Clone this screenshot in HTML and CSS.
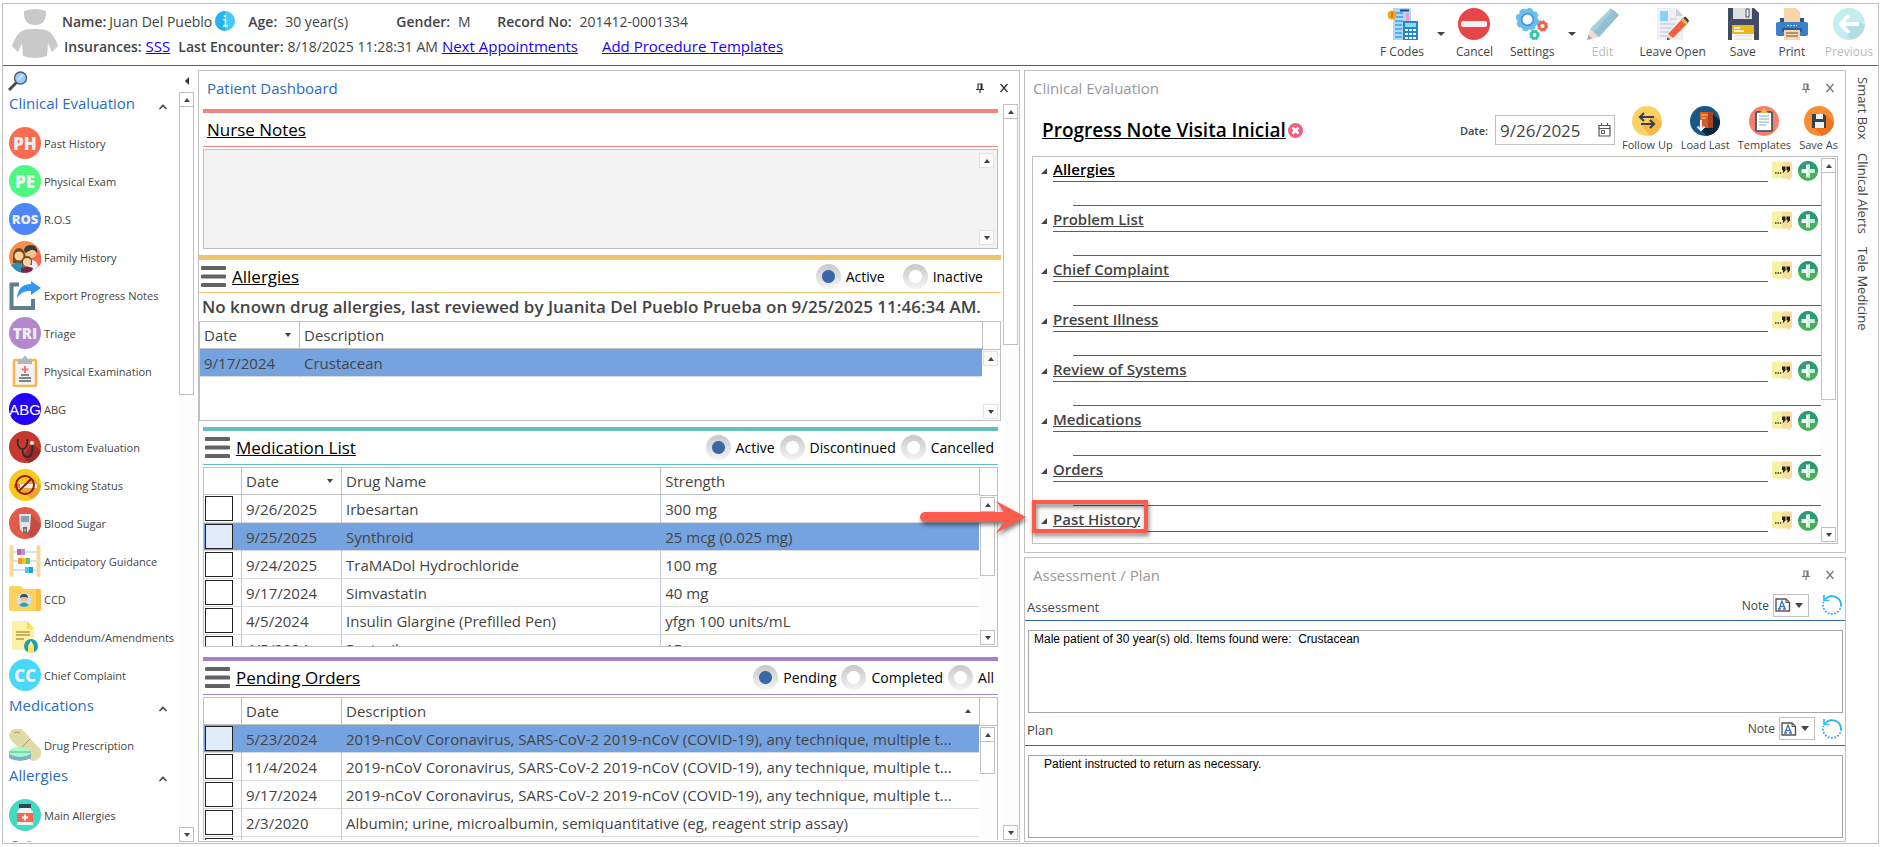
FILE: index.html
```
<!DOCTYPE html>
<html lang="en">
<head>
  <meta charset="UTF-8">
  <title>Patient Dashboard</title>
  <link rel="stylesheet" href="styles.css">
</head>
<body>

<!-- icons used more than once -->
<svg class="sprite" aria-hidden="true">
  <symbol id="i-menu" viewBox="0 0 25 21"><path d="M1.5 2h22M1.500 10.500h22M1.500 19h22" stroke="#636363" stroke-width="4" stroke-linecap="round"/></symbol>
  <symbol id="i-pin" viewBox="0 0 10 10"><path d="M3 6V1h4v5M1 6.500h8M5 6.500V10" fill="none" stroke="currentColor" stroke-width="1.200"/><path d="M5.500 1H7v5H5.500z" fill="currentColor"/></symbol>
  <symbol id="i-close" viewBox="0 0 10 10"><path d="M1.500 1l7 8M8.500 1l-7 8" stroke="currentColor" stroke-width="1.300"/></symbol>
  <symbol id="i-chevron" viewBox="0 0 10 6"><path d="M1.500 5L5 1.500 8.500 5" fill="none" stroke="#444" stroke-width="1.600"/></symbol>
  <symbol id="i-note" viewBox="0 0 20 19"><path d="M2 0h8v17H2a2 2 0 0 1-2-2V2a2 2 0 0 1 2-2z" fill="#f5f3a0"/><path d="M10 0h8a2 2 0 0 1 2 2v13a2 2 0 0 1-2 2v2l-3-2h-5z" fill="#f6df9c"/><path d="M3 11.500h1.500M5.500 11.500H7M8 11.500h1.200" stroke="#333" stroke-width="1.300"/><path d="M10 5h3.500v4L11 11.500V8.500h-1zM14.500 5H18v4l-2.500 2.500V8.500h-1z" fill="#222"/></symbol>
  <symbol id="i-plus" viewBox="0 0 20 20"><circle cx="10" cy="10" r="10" fill="#46b158"/><path d="M0 10a10 10 0 0 1 20 0z" fill="#2a9a78"/><path d="M8 3.500h4V8h4.500v4H12v4.500H8V12H3.500V8H8z" fill="#eefaf0"/><path d="M10 3.500h2V8h4.500v4H12v4.500h-2z" fill="#cdeed8"/></symbol>
  <symbol id="i-doc" viewBox="0 0 16 14"><path d="M1 1h10l3.500 3.500V13H1z" fill="#fff" stroke="#555" stroke-width="1.400"/><path d="M11 1v3.500h3.500" fill="none" stroke="#555"/><path d="M3 11h3M8 11h3M4.200 10.500L7 3l3 7.500M5.300 8.500h3.500" fill="none" stroke="#3b78c4" stroke-width="1.300"/></symbol>
  <symbol id="i-redo" viewBox="0 0 20 20"><path d="M3 4.500A9 9 0 0 1 19 10" fill="none" stroke="#29b1ee" stroke-width="1.700"/><path d="M19 10A9 9 0 1 1 1.500 7" fill="none" stroke="#29a6ea" stroke-width="1.700" stroke-dasharray="1.800 1.500"/><path d="M2 0v5.500h5.500" fill="none" stroke="#29c0f5" stroke-width="1.700"/></symbol>
</svg>

<div class="app">
  <header class="topbar">
    <svg class="avatar" viewBox="0 0 46 50"><path d="M12 3q11-4 22 0 1 14-11 14T12 3z" fill="#c9c9c9"/><path d="M10 23q3-2 13-2t13 2q6 3 10 15l-6 6-4-9-1 13q-12 4-24 0l-1-13-4 9-6-6q4-12 10-15z" fill="#c9c9c9"/></svg>
    <div class="patient">
      <div class="patient-row">
        <span class="field name"><b>Name:</b>Juan Del Pueblo
          <svg class="info" viewBox="0 0 20 20"><circle cx="10" cy="10" r="10" fill="#42cbfb"/><path d="M10 0a10 10 0 0 0 0 20z" fill="#25b4ee"/><circle cx="10" cy="5" r="1.300" fill="#fff"/><path d="M8.500 8.500H10.500V15M8 15h5" fill="none" stroke="#fff" stroke-width="1.500"/></svg>
        </span>
        <span class="field age"><b>Age:</b>30 year(s)</span>
        <span class="field gender"><b>Gender:</b>M</span>
        <span class="field"><b>Record No:</b>201412-0001334</span>
      </div>
      <div class="patient-row second">
        <span class="field tight"><b>Insurances:</b><a href="#">SSS</a></span>
        <span class="field tight"><b>Last Encounter:</b>8/18/2025 11:28:31 AM <a href="#">Next Appointments</a></span>
        <a class="templates" href="#">Add Procedure Templates</a>
      </div>
    </div>

    <nav class="toolbar">
      <div class="split">
        <button class="tool">
          <svg viewBox="0 0 32 32"><path d="M7 0h18v32H7z" fill="#a9d9fb"/><path d="M9 5h8M9 9h8M9 13h8M9 17h7M9 21h7M9 25h7M9 29h7" stroke="#4097f0" stroke-width="1.500"/><path d="M14 1.500h9v2h-9z" fill="#2b3f73"/><path d="M20 5h3v8h-3z" fill="#f79ac0"/><circle cx="6" cy="7" r="4.500" fill="#f8a51b"/><path d="M6 4v6" stroke="#c66d08" stroke-width="1.500"/><path d="M17 13h15v19H17z" fill="#2386cf"/><path d="M19 15h11v4H19z" fill="#8fdcf9"/><path d="M19 21h3v2h-3zM23 21h3v2h-3zM27 21h3v2h-3zM19 25h3v2h-3zM23 25h3v2h-3zM27 25h3v2h-3zM19 29h3v2h-3zM23 29h3v2h-3zM27 29h3v2h-3z" fill="#fff"/></svg>
          F Codes
        </button>
        <button class="caret" aria-label="More codes"></button>
      </div>
      <button class="tool">
        <svg viewBox="0 0 32 32"><circle cx="16" cy="16" r="16" fill="#e8454a"/><rect x="3" y="13" width="26" height="6" rx="2" fill="#f3f1f1"/></svg>
        Cancel
      </button>
      <div class="split">
        <button class="tool">
          <svg viewBox="0 0 32 32"><circle cx="11.500" cy="11.500" r="8" fill="none" stroke="#69bdf1" stroke-width="5"/><circle cx="11.500" cy="11.500" r="10.500" fill="none" stroke="#69bdf1" stroke-width="2.500" stroke-dasharray="5 3.200"/><circle cx="11.500" cy="11.500" r="5.800" fill="#fff" stroke="#3d8fe0" stroke-width="1.500"/><circle cx="26.500" cy="18" r="3.500" fill="none" stroke="#f1634c" stroke-width="2.800"/><circle cx="26.500" cy="18" r="4.900" fill="none" stroke="#f1634c" stroke-width="1.500" stroke-dasharray="2 1.800"/><circle cx="18.500" cy="27" r="3.300" fill="none" stroke="#32c9a8" stroke-width="2.800"/><circle cx="18.500" cy="27" r="4.500" fill="none" stroke="#32c9a8" stroke-width="1.500" stroke-dasharray="2 1.600"/></svg>
          Settings
        </button>
        <button class="caret" aria-label="More settings"></button>
      </div>
      <button class="tool" disabled>
        <svg viewBox="0 0 32 32"><path d="M3 21L24 0l8 7-20 22z" fill="#a4d0de"/><path d="M26 2l6 5-20 22-5-4z" fill="#92c1d2"/><path d="M3 21l9 8-12 3z" fill="#f3d9cf"/><path d="M0 32l1.500-5 4 3.500z" fill="#aab"/></svg>
        Edit
      </button>
      <button class="tool wide">
        <svg viewBox="0 0 32 32"><path d="M0 0h19l7 7v25H0z" fill="#eef0f4"/><path d="M19 0l7 8h-7z" fill="#ccd2df"/><path d="M3 3h8v10H3z" fill="#80d4fa"/><path d="M13 11h7M3 16h15M3 20h12M3 24h9M3 28h8" stroke="#ccd2df" stroke-width="1.500"/><path d="M11 26L26 10l5 5-15 15z" fill="#f2603f"/><path d="M26 10l2.500-1.500 3.500 4L31 15z" fill="#3c4155"/><path d="M24 12l5 5 2-2-5-5z" fill="#f9b53c"/><path d="M11 26l5 4-6 2z" fill="#f7cf93"/><path d="M10 32l.5-2.500 2.500 2z" fill="#333"/></svg>
        Leave Open
      </button>
      <button class="tool">
        <svg viewBox="0 0 32 32"><path d="M1 0h26l5 5v27H1z" fill="#434a66"/><path d="M6 0h19v11H6z" fill="#dfe0e2"/><path d="M19 1h3v8h-3z" fill="#fff" stroke="#434a66"/><path d="M5 17h22v9H5z" fill="#eab818"/><path d="M5 26h22v6H5z" fill="#fff"/><path d="M7 20h6M7 23h10" stroke="#fff" stroke-width="1.500"/><path d="M7 28h18M7 31h18" stroke="#d5d5d5"/></svg>
        Save
      </button>
      <button class="tool">
        <svg viewBox="0 0 32 32"><path d="M8 0h12l4 4v10H8z" fill="#fbd5a7"/><path d="M4 10h4v4h16v-4h4v4H4z" fill="#35507d"/><path d="M2 14h28a2 2 0 0 1 2 2v10a2 2 0 0 1-2 2H2a2 2 0 0 1-2-2V16a2 2 0 0 1 2-2z" fill="#3e80c5"/><path d="M6 20h20v4H6z" fill="#2d5c98"/><path d="M8 22h16v10H8z" fill="#fbd5a7"/><path d="M11 17.500h10" stroke="#cfe3fa" stroke-dasharray="2 1"/><path d="M10 25h12M10 28h12" stroke="#555"/></svg>
        Print
      </button>
      <button class="tool" disabled>
        <svg viewBox="0 0 32 32"><circle cx="16" cy="16" r="16" fill="#c5ecf0"/><path d="M8 18l10 13.500A16 16 0 0 0 32 17l-6-3z" fill="#b1dee3"/><path d="M16 7l-8.500 9L16 25M8 16h18" fill="none" stroke="#fff" stroke-width="4"/></svg>
        Previous
      </button>
    </nav>
  </header>

  <div class="workspace">
    <aside class="sidebar">
      <div class="sidebar-top">
        <button class="search" aria-label="Search"><svg viewBox="0 0 20 20"><path d="M1 19l8-8" stroke="#4a4a4a" stroke-width="3"/><circle cx="12.500" cy="7" r="6" fill="#9dcdfa" stroke="#50606c" stroke-width="1.500"/><path d="M10 9l5-5" stroke="#d4eaff" stroke-width="1.500"/></svg></button>
        <button class="collapse" aria-label="Collapse"></button>
      </div>
      <div class="sidebar-body">
        <div class="menu">
          <h2>Clinical Evaluation <svg><use href="#i-chevron"/></svg></h2>
          <a href="#" class="item"><i class="badge ph">PH</i>Past History</a>
          <a href="#" class="item"><i class="badge pe">PE</i>Physical Exam</a>
          <a href="#" class="item"><i class="badge ros">ROS</i>R.O.S</a>
          <a href="#" class="item"><svg viewBox="0 0 32 32"><circle cx="16" cy="16" r="16" fill="#f78f4d"/><path d="M20 4q10 2 12 12t-8 12z" fill="#f9664b"/><circle cx="22" cy="11" r="6" fill="#f5c48b"/><path d="M15 10q0-6 7-6t6 8q-3-4-6-3t-5 3z" fill="#333b45"/><path d="M17 20q9-4 12 5-4 6-9 7z" fill="#f1f1f3"/><path d="M4 22q-1-15 6-15t7 15z" fill="#774824"/><circle cx="10" cy="15" r="4.500" fill="#fcd19c"/><path d="M2 24q8-5 14 0l-1 8Q6 31 2 24z" fill="#2c8fb3"/><path d="M13 24q-1-9 5-9t5 9z" fill="#774824"/><circle cx="18" cy="21" r="4" fill="#fcd19c"/><path d="M12 27q6-3 12 0l-1 3q-5 3-11 1z" fill="#7c2253"/></svg>Family History</a>
          <a href="#" class="item"><svg viewBox="0 0 32 32"><path d="M10 5.500H2.500V29H24V20" fill="none" stroke="#5f7f8e" stroke-width="4"/><path d="M8 19Q9 5 22 5V2l10 7-10 7v-4q-9-1-14 7z" fill="#3698f4"/></svg>Export Progress Notes</a>
          <a href="#" class="item"><i class="badge tri">TRI</i>Triage</a>
          <a href="#" class="item"><svg viewBox="0 0 32 32"><rect x="5" y="5" width="22" height="26" rx="1" fill="#f3f2f2" stroke="#f9b548" stroke-width="2.500"/><path d="M9 4h4l3-3.500L19 4h4v5H9z" fill="#b3b6b8"/><path d="M16 11v7M12.500 14.500h7" stroke="#f27374" stroke-width="2"/><path d="M12 20h8M10 23h12M10 26h12" stroke="#566" stroke-width="1.300"/></svg>Physical Examination</a>
          <a href="#" class="item"><i class="badge abg">ABG</i>ABG</a>
          <a href="#" class="item"><svg viewBox="0 0 32 32"><circle cx="16" cy="16" r="16" fill="#c5392f"/><path d="M23 12l9 8q-3 9-12 12l-6-7z" fill="#9d2a25"/><path d="M10 9H8.500q0 9 5 9t5-9H17M13.500 18q0 8 5 8t5-12" fill="none" stroke="#2b2b2f" stroke-width="1.700"/><circle cx="23" cy="12" r="2" fill="#eee"/></svg>Custom Evaluation</a>
          <a href="#" class="item"><svg viewBox="0 0 32 32"><circle cx="16" cy="16" r="16" fill="#f8c81e"/><path d="M24 9l8 8q-1 9-9 13l-11-7z" fill="#eda531"/><path d="M5 15h13v4H5z" fill="#f47721"/><path d="M11 15h17v4H11z" fill="#f4f4f4"/><circle cx="16" cy="16" r="9" fill="none" stroke="#93190f" stroke-width="2"/><path d="M9.500 22.500l13-13" stroke="#93190f" stroke-width="2"/></svg>Smoking Status</a>
          <a href="#" class="item"><svg viewBox="0 0 32 32"><circle cx="16" cy="16" r="16" fill="#e35a4b"/><path d="M22 8l10 10q-2 9-9 13l-8-7z" fill="#c44b3d"/><path d="M10 7h12l-1 15-3 4h-4l-3-4z" fill="#dfe5ea"/><path d="M12 9h8v6h-8z" fill="#87a1b3"/><path d="M14 20h4v6h-4z" fill="#566e80"/><circle cx="16" cy="23" r="1.500" fill="#e8a831"/></svg>Blood Sugar</a>
          <a href="#" class="item"><svg viewBox="0 0 32 32"><path d="M2 7h28M2 16h28M2 25h28" stroke="#c6daeb" stroke-width="1.500"/><path d="M2.500 2v28M29.500 2v28" stroke="#f3d9a0" stroke-width="4" stroke-linecap="round"/><path d="M8 4h4v6H8z" fill="#c9619c"/><path d="M12 4h4v6h-4z" fill="#b794cf"/><path d="M9 13h4v6H9z" fill="#f49430"/><path d="M13 13h4v6h-4z" fill="#f8c512"/><path d="M17 13h4v6h-4z" fill="#6fbf7b"/><path d="M16 22h4v6h-4z" fill="#45cdec"/><path d="M20 22h4v6h-4z" fill="#309cc8"/></svg>Anticipatory Guidance</a>
          <a href="#" class="item"><svg viewBox="0 0 32 32"><path d="M0 5q0-2 2-2h9l4 3h15q2 0 2 2v18q0 2-2 2H2q-2 0-2-2z" fill="#fcd25c"/><path d="M27 6h3q2 0 2 2v18q0 2-2 2h-3z" fill="#f8bd44"/><circle cx="15" cy="17" r="7.500" fill="#cde0ec"/><circle cx="15" cy="16" r="3.500" fill="#f7c48c"/><path d="M11 15q0-4 4-4t4 4q-4-2-8 0z" fill="#3b4a57"/><path d="M10 22q5-5 10 0-5 4-10 0z" fill="#2ba0ac"/></svg>CCD</a>
          <a href="#" class="item"><svg viewBox="0 0 32 32"><path d="M3 0h15l7 7v22H3z" fill="#fdf1a9"/><path d="M18 0l7 8h-7z" fill="#fede3a"/><path d="M7 11h14M7 14h14M7 18h8" stroke="#b99b3e" stroke-width="1.300"/><circle cx="22" cy="25" r="7" fill="#22a0a0"/><path d="M19 32v-7l3-5 3 5v7z" fill="#fee36c"/><path d="M22 20l-2 4h4z" fill="#fff"/></svg>Addendum/Amendments</a>
          <a href="#" class="item"><i class="badge cc">CC</i>Chief Complaint</a>
          <h2>Medications <svg><use href="#i-chevron"/></svg></h2>
          <a href="#" class="item"><svg viewBox="0 0 32 32"><path d="M2 11Q-2 5 3 1t10-1l18 20q3 6-2 10t-9 0z" fill="#dfdaa8"/><path d="M21 10l-9 9" stroke="#a59e6b"/><path d="M5 4q3-2 6 0" fill="none" stroke="#a8a06b"/><path d="M0 23h22v6q-11 6-22 0z" fill="#7baecb"/><ellipse cx="11" cy="23" rx="11" ry="5" fill="#a2fbc5"/><path d="M0 23h22" stroke="#56b593"/></svg>Drug Prescription</a>
          <h2>Allergies <svg><use href="#i-chevron"/></svg></h2>
          <a href="#" class="item"><svg viewBox="0 0 32 32"><circle cx="16" cy="16" r="16" fill="#44d9c2"/><path d="M10 5h12v4H10z" fill="#34465b"/><path d="M11 9h10l3 4v13H8V13z" fill="#f2f3f5"/><path d="M8 14h16v9H8z" fill="#f5684f"/><path d="M16 15.500v6M13 18.500h6" stroke="#fff" stroke-width="2"/></svg>Main Allergies</a>
          <a href="#" class="item" aria-label="Other"><svg viewBox="0 0 32 32"><circle cx="6" cy="10" r="6" fill="#6f63b5"/><circle cx="20" cy="8" r="4" fill="#e496c6"/><path d="M17 10l6-4" stroke="#c967a4" stroke-width="1.500"/></svg></a>
        </div>
        <div class="scroll"><button class="up" aria-label="Up"></button><div class="track"><div class="thumb" style="height:40%"></div></div><button class="down" aria-label="Down"></button></div>
      </div>
    </aside>

    <main class="panel dashboard">
      <div class="panel-title active"><h1>Patient Dashboard</h1><button aria-label="Pin"><svg><use href="#i-pin"/></svg></button><button aria-label="Close"><svg><use href="#i-close"/></svg></button></div>
      <div class="dashboard-body">
        <div class="sections">
          <section class="section nurse">
            <div class="section-head"><a href="#">Nurse Notes</a></div>
            <div class="notes">
              <textarea readonly aria-label="Nurse Notes"></textarea>
              <div class="scroll soft"><button class="up" aria-label="Up"></button><div class="track"></div><button class="down" aria-label="Down"></button></div>
            </div>
          </section>

          <section class="section allergies">
            <div class="section-head">
              <svg class="menu-icon"><use href="#i-menu"/></svg><a href="#">Allergies</a>
              <div class="radios">
                <label><input type="radio" name="allergy" checked>Active</label>
                <label><input type="radio" name="allergy">Inactive</label>
              </div>
            </div>
            <p class="reviewed">No known drug allergies, last reviewed by Juanita Del Pueblo Prueba on 9/25/2025 11:46:34 AM.</p>
            <div class="grid">
              <table>
                <thead><tr><th class="date">Date<span class="sort-down"></span></th><th>Description</th></tr></thead>
                <tbody><tr class="selected"><td>9/17/2024</td><td>Crustacean</td></tr></tbody>
              </table>
              <div class="scroll-col"><div class="scroll soft"><button class="up" aria-label="Up"></button><div class="track"></div><button class="down" aria-label="Down"></button></div></div>
            </div>
          </section>

          <section class="section medication">
            <div class="section-head">
              <svg class="menu-icon"><use href="#i-menu"/></svg><a href="#">Medication List</a>
              <div class="radios">
                <label><input type="radio" name="medication" checked>Active</label>
                <label><input type="radio" name="medication">Discontinued</label>
                <label><input type="radio" name="medication">Cancelled</label>
              </div>
            </div>
            <div class="grid">
              <table>
                <thead><tr><th class="check"></th><th class="date">Date<span class="sort-down"></span></th><th>Drug Name</th><th class="strength">Strength</th></tr></thead>
                <tbody>
                  <tr><td class="check"><input type="checkbox" aria-label="Irbesartan"></td><td>9/26/2025</td><td>Irbesartan</td><td>300 mg</td></tr>
                  <tr class="selected"><td class="check"><input type="checkbox" aria-label="Synthroid"></td><td>9/25/2025</td><td>Synthroid</td><td>25 mcg (0.025 mg)</td></tr>
                  <tr><td class="check"><input type="checkbox" aria-label="TraMADol"></td><td>9/24/2025</td><td>TraMADol Hydrochloride</td><td>100 mg</td></tr>
                  <tr><td class="check"><input type="checkbox" aria-label="Simvastatin"></td><td>9/17/2024</td><td>Simvastatin</td><td>40 mg</td></tr>
                  <tr><td class="check"><input type="checkbox" aria-label="Insulin Glargine"></td><td>4/5/2024</td><td>Insulin Glargine (Prefilled Pen)</td><td>yfgn 100 units/mL</td></tr>
                  <tr><td class="check"><input type="checkbox" aria-label="Restoril"></td><td>4/5/2024</td><td>Restoril</td><td>15 mg</td></tr>
                </tbody>
              </table>
              <div class="scroll-col"><div class="scroll"><button class="up" aria-label="Up"></button><div class="track"><div class="thumb" style="height:54%"></div></div><button class="down" aria-label="Down"></button></div></div>
            </div>
          </section>

          <section class="section pending">
            <div class="section-head">
              <svg class="menu-icon"><use href="#i-menu"/></svg><a href="#">Pending Orders</a>
              <div class="radios">
                <label><input type="radio" name="orders" checked>Pending</label>
                <label><input type="radio" name="orders">Completed</label>
                <label><input type="radio" name="orders">All</label>
              </div>
            </div>
            <div class="grid">
              <table>
                <thead><tr><th class="check"></th><th class="date">Date</th><th>Description<span class="sort-up"></span></th></tr></thead>
                <tbody>
                  <tr class="selected"><td class="check"><input type="checkbox" aria-label="Order 5/23/2024"></td><td>5/23/2024</td><td>2019-nCoV Coronavirus, SARS-CoV-2 2019-nCoV (COVID-19), any technique, multiple t...</td></tr>
                  <tr><td class="check"><input type="checkbox" aria-label="Order 11/4/2024"></td><td>11/4/2024</td><td>2019-nCoV Coronavirus, SARS-CoV-2 2019-nCoV (COVID-19), any technique, multiple t...</td></tr>
                  <tr><td class="check"><input type="checkbox" aria-label="Order 9/17/2024"></td><td>9/17/2024</td><td>2019-nCoV Coronavirus, SARS-CoV-2 2019-nCoV (COVID-19), any technique, multiple t...</td></tr>
                  <tr><td class="check"><input type="checkbox" aria-label="Order 2/3/2020"></td><td>2/3/2020</td><td>Albumin; urine, microalbumin, semiquantitative (eg, reagent strip assay)</td></tr>
                  <tr><td class="check"><input type="checkbox" aria-label="Order"></td><td></td><td></td></tr>
                </tbody>
              </table>
              <div class="scroll-col"><div class="scroll"><button class="up" aria-label="Up"></button><div class="track"><div class="thumb" style="height:27%"></div></div><button class="down" aria-label="Down"></button></div></div>
            </div>
          </section>
        </div>
        <div class="scroll"><button class="up" aria-label="Up"></button><div class="track"><div class="thumb" style="height:32%"></div></div><button class="down" aria-label="Down"></button></div>
      </div>
    </main>

    <div class="right">
      <section class="panel evaluation">
        <div class="panel-title"><h1>Clinical Evaluation</h1><button aria-label="Pin"><svg><use href="#i-pin"/></svg></button><button aria-label="Close"><svg><use href="#i-close"/></svg></button></div>
        <div class="note-bar">
          <a class="note-name" href="#">Progress Note Visita Inicial</a>
          <button class="remove" aria-label="Remove note"><svg viewBox="0 0 15 15"><circle cx="7.500" cy="7.500" r="7.500" fill="#f4607a"/><path d="M4.500 4.500l6 6M10.500 4.500l-6 6" stroke="#fff" stroke-width="2.500"/></svg></button>
          <label class="date-label" for="note-date">Date:</label>
          <div class="date-box"><input id="note-date" type="text" value="9/26/2025"><svg viewBox="0 0 13 14"><path d="M1 2.500h11V13H1zM1 5.500h11M3.500 0v3M9.500 0v3" fill="none" stroke="#555" stroke-width="1.200"/><path d="M3.500 7.500h3v3h-3z" fill="none" stroke="#555"/></svg></div>
          <div class="actions">
            <button><svg viewBox="0 0 30 30"><circle cx="15" cy="15" r="15" fill="#fad162"/><path d="M22 10l8 7q-2 9-11 13l-9-9z" fill="#f9b744"/><path d="M12 7l-4 4 4 4M8 11h14M18 14l4 4-4 4M22 18H9" fill="none" stroke="#35404f" stroke-width="2.200"/></svg>Follow Up</button>
            <button><svg viewBox="0 0 30 30"><circle cx="15" cy="15" r="15" fill="#185a85"/><path d="M22 7l8 8q0 12-13 15l-7-7z" fill="#0b2539"/><path d="M10 6h13v16H10z" fill="#a8431f"/><path d="M10 6h8v16h-8z" fill="#d65b2b"/><path d="M11 9h7M11 12h5" stroke="#f9b233" stroke-width="1.500"/><path d="M11 14v10M7.500 20.500L11 24l3.500-3.500" fill="none" stroke="#e8f4ff" stroke-width="2"/></svg>Load Last</button>
            <button><svg viewBox="0 0 30 30"><circle cx="15" cy="15" r="15" fill="#f5806c"/><rect x="7" y="6" width="16" height="19" rx="1" fill="#fff" stroke="#344658" stroke-width="1.600"/><path d="M11 7l4-5 4 5z" fill="#f9b642"/><path d="M10 10h10M10 13h10M10 16h10M10 19h7" stroke="#a9cbe5" stroke-width="1.300"/></svg>Templates</button>
            <button><svg viewBox="0 0 30 30"><circle cx="15" cy="15" r="15" fill="#f88e31"/><path d="M22 9l8 8q-2 10-12 13l-9-9z" fill="#ef7421"/><path d="M8 8h12l2 2v12H8z" fill="#35404f"/><path d="M12 8h7v5h-7zM11 16h9v6h-9z" fill="#eef1f5"/></svg>Save As</button>
          </div>
        </div>
        <div class="outline">
          <div class="topics">
            <div class="topic current"><a href="#">Allergies</a><button aria-label="Note"><svg><use href="#i-note"/></svg></button><button aria-label="Add"><svg><use href="#i-plus"/></svg></button></div>
            <div class="topic"><a href="#">Problem List</a><button aria-label="Note"><svg><use href="#i-note"/></svg></button><button aria-label="Add"><svg><use href="#i-plus"/></svg></button></div>
            <div class="topic"><a href="#">Chief Complaint</a><button aria-label="Note"><svg><use href="#i-note"/></svg></button><button aria-label="Add"><svg><use href="#i-plus"/></svg></button></div>
            <div class="topic"><a href="#">Present Illness</a><button aria-label="Note"><svg><use href="#i-note"/></svg></button><button aria-label="Add"><svg><use href="#i-plus"/></svg></button></div>
            <div class="topic"><a href="#">Review of Systems</a><button aria-label="Note"><svg><use href="#i-note"/></svg></button><button aria-label="Add"><svg><use href="#i-plus"/></svg></button></div>
            <div class="topic"><a href="#">Medications</a><button aria-label="Note"><svg><use href="#i-note"/></svg></button><button aria-label="Add"><svg><use href="#i-plus"/></svg></button></div>
            <div class="topic"><a href="#">Orders</a><button aria-label="Note"><svg><use href="#i-note"/></svg></button><button aria-label="Add"><svg><use href="#i-plus"/></svg></button></div>
            <div class="topic last"><a href="#">Past History</a><button aria-label="Note"><svg><use href="#i-note"/></svg></button><button aria-label="Add"><svg><use href="#i-plus"/></svg></button>
              <div class="callout"><svg viewBox="0 0 106 32"><path d="M5 11h79l-8-11 30 16-30 16 8-11H5a5 5 0 0 1 0-10z" fill="#fc5b4b"/></svg></div>
            </div>
          </div>
          <div class="scroll"><button class="up" aria-label="Up"></button><div class="track"><div class="thumb" style="height:64%"></div></div><button class="down" aria-label="Down"></button></div>
        </div>
      </section>

      <section class="panel assessment">
        <div class="panel-title"><h1>Assessment / Plan</h1><button aria-label="Pin"><svg><use href="#i-pin"/></svg></button><button aria-label="Close"><svg><use href="#i-close"/></svg></button></div>
        <div class="text-head"><label for="assess">Assessment</label><span>Note</span><button class="picker" aria-label="Assessment note"><svg><use href="#i-doc"/></svg></button><button class="redo" aria-label="Reload"><svg><use href="#i-redo"/></svg></button></div>
        <textarea id="assess">Male patient of 30 year(s) old. Items found were:  Crustacean</textarea>
        <div class="text-head plan"><label for="plan">Plan</label><span>Note</span><button class="picker" aria-label="Plan note"><svg><use href="#i-doc"/></svg></button><button class="redo" aria-label="Reload"><svg><use href="#i-redo"/></svg></button></div>
        <textarea id="plan">   Patient instructed to return as necessary.</textarea>
      </section>
    </div>

    <nav class="side-tabs">
      <a href="#">Smart Box</a>
      <a href="#">Clinical Alerts</a>
      <a href="#">Tele Medicine</a>
    </nav>
  </div>
</div>

</body>
</html>
```
FILE: styles.css
```
* {
  box-sizing: border-box;
}

html, body {
  margin: 0;
  height: 100%;
}

body {
  padding: 3px 2px;
  overflow: hidden;
  background: #fff;
  color: #444;
  font-family: "Open Sans", "Noto Sans", sans-serif;
  font-size: 15px;
}

button {
  padding: 0;
  border: 0;
  background: none;
  color: inherit;
  font: inherit;
}

a {
  color: inherit;
}

svg {
  display: block;
  flex: none;
}

textarea {
  display: block;
  resize: none;
  outline: none;
}

.sprite {
  display: none;
}

.app {
  display: flex;
  flex-direction: column;
  height: 100%;
  border: 1px solid #c0c0c0;
}

/* top bar */

.topbar {
  flex: none;
  display: flex;
  height: 62px;
  padding: 4px 5px 0 9px;
  border-bottom: 1px solid #3566a5;
}

.avatar {
  width: 46px;
  height: 50px;
}

.patient {
  flex: 1;
  padding: 2px 0 0 4px;
  font-size: 14px;
  white-space: nowrap;
}

.patient b {
  font-weight: 600;
}

.patient a {
  color: #1b00f5;
  font-size: 15px;
}

.patient-row {
  display: flex;
  height: 22px;
  align-items: center;
}

.patient-row.second {
  gap: 8px;
  padding-left: 2px;
  margin-top: 3px;
}

.field {
  display: flex;
  gap: 8px;
  align-items: center;
}

.field.name {
  gap: 3px;
  margin-right: 13px;
}

.field.tight {
  gap: 4px;
}

.field.age {
  min-width: 148px;
}

.field.gender {
  min-width: 101px;
}

.templates {
  margin-left: 16px;
}

.info {
  width: 20px;
  height: 20px;
}

.toolbar {
  display: flex;
  gap: 17px;
  align-items: flex-start;
}

.tool {
  display: flex;
  flex-direction: column;
  align-items: center;
  gap: 4px;
  font-size: 12px;
  line-height: 16px;
  white-space: nowrap;
}

.tool svg {
  width: 32px;
  height: 32px;
}

.tool.wide {
  padding: 0 4px;
}

.tool:disabled {
  color: #bbb;
}

.split {
  display: flex;
  gap: 13px;
  margin-right: -6px;
}

.caret {
  align-self: center;
  border: 4px solid transparent;
  border-top-color: #444;
  border-bottom: 0;
}

/* layout under the bar */

.workspace {
  flex: 1;
  min-height: 0;
  display: grid;
  grid-template-columns: 191px minmax(0, 1fr) minmax(0, 1fr) 28px;
  grid-template-rows: minmax(0, 1fr);
  column-gap: 4px;
  padding: 4px 0 1px;
}

.panel {
  border: 1px solid #c0c0c0;
}

.panel-title {
  display: flex;
  align-items: center;
  gap: 14px;
  height: 33px;
  padding: 0 10px 0 8px;
  color: #777;
}

.panel-title h1 {
  flex: 1;
  margin: 0;
  font-size: 15px;
  font-weight: 400;
  color: #999;
}

.panel-title.active {
  color: #333;
}

.panel-title.active h1 {
  color: #2a6cbd;
}

.panel-title svg {
  width: 10px;
  height: 10px;
}

/* scroll bars */

.scroll {
  flex: none;
  display: flex;
  flex-direction: column;
  width: 15px;
}

.scroll button {
  flex: none;
  display: flex;
  align-items: center;
  justify-content: center;
  height: 15px;
  border: 1px solid #c0c0c0;
}

.scroll.soft button {
  border-color: #e2e2e2;
  background: #fbfbfb;
}

.scroll button::before,
.sort-down,
.sort-up {
  content: "";
  border: 3px solid transparent;
}

.scroll .up::before,
.sort-up {
  border-top: 0;
  border-bottom: 4px solid #444;
}

.scroll .down::before,
.sort-down {
  border-bottom: 0;
  border-top: 4px solid #444;
}

.track {
  flex: 1;
  background: #fdfdfd;
}

.soft .track {
  background: none;
}

.thumb {
  border: 1px solid #c0c0c0;
  border-top: 0;
  background: #fff;
}

/* sidebar */

.sidebar {
  display: flex;
  flex-direction: column;
  min-height: 0;
}

.sidebar-top {
  display: flex;
  justify-content: space-between;
  align-items: center;
  height: 22px;
  padding: 0 5px;
}

.search svg {
  width: 20px;
  height: 20px;
}

.collapse {
  border: 4px solid transparent;
  border-right-color: #333;
  border-left: 0;
}

.sidebar-body {
  flex: 1;
  min-height: 0;
  display: flex;
}

.menu {
  flex: 1;
  overflow: hidden;
  padding-left: 6px;
}

.menu h2 {
  display: flex;
  align-items: center;
  justify-content: space-between;
  height: 22px;
  margin: 0 11px 10px 0;
  font-size: 15px;
  font-weight: 400;
  color: #2a6cbd;
}

.menu h2 svg {
  width: 10px;
  height: 6px;
  margin-top: 8px;
}

.item {
  display: flex;
  align-items: center;
  gap: 3px;
  height: 38px;
  font-size: 11px;
  text-decoration: none;
  white-space: nowrap;
}

.item svg {
  width: 32px;
  height: 32px;
}

.badge {
  flex: none;
  display: flex;
  align-items: center;
  justify-content: center;
  width: 32px;
  height: 32px;
  border-radius: 50%;
  color: #eee;
  font-size: 17px;
  font-style: normal;
  font-weight: 800;
}

.ph { background: #f96c50; }
.pe { background: #4df781; }
.ros { background: #4c85f8; font-size: 13px; }
.tri { background: #b388cd; font-size: 15px; }
.cc { background: #47d8fa; }

.abg {
  background: #2200fb;
  color: #fff;
  font-family: "Liberation Sans", sans-serif;
  font-size: 15px;
  font-weight: 400;
}

/* patient dashboard */

.dashboard {
  display: flex;
  flex-direction: column;
  min-height: 0;
}

.dashboard-body {
  flex: 1;
  min-height: 0;
  display: flex;
  padding: 0 1px 1px 0;
}

.sections {
  flex: 1;
  min-width: 0;
  overflow: hidden;
  padding-top: 5px;
}

.section {
  margin: 0 5px 6px 4px;
}

.section-head {
  display: flex;
  align-items: center;
  height: 38px;
  margin-bottom: 2px;
  padding: 0 4px 0 2px;
  border-top: 4px solid;
  border-bottom: 1px solid;
}

.section-head > a {
  color: #000;
  font-size: 17px;
}

.nurse .section-head {
  padding-left: 4px;
  border-color: #f28583;
}

.allergies {
  margin: 0 2px 6px 0;
}

.allergies .section-head {
  margin-bottom: 0;
  padding-right: 18px;
  border-top-width: 5px;
  border-color: #f0c369;
}

.allergies .radios {
  gap: 18px;
}

.medication {
  margin-bottom: 10px;
}

.medication .section-head {
  border-color: #63bfc0;
}

.pending .section-head {
  border-color: #a881c6;
}

.menu-icon {
  width: 25px;
  height: 21px;
  margin-right: 6px;
}

.radios {
  display: flex;
  gap: 5px;
  margin-left: auto;
  color: #000;
  font-size: 14px;
}

.radios label {
  display: flex;
  align-items: center;
  gap: 5px;
}

.radios input {
  appearance: none;
  width: 25px;
  height: 25px;
  margin: 0;
  border-radius: 50%;
  background: radial-gradient(circle, #fff 6px, transparent 7px), linear-gradient(#c8c8c8, #f4f4f4);
}

.radios input:checked {
  background: radial-gradient(circle, #3868a8 6px, transparent 7px), linear-gradient(#c8c8c8, #f4f4f4);
}

.notes {
  display: flex;
  height: 100px;
  padding: 3px;
  border: 1px solid #c0c0c0;
  background: #f3f3f3;
}

.notes textarea {
  flex: 1;
  border: 0;
  background: none;
}

.reviewed {
  margin: 0;
  padding-left: 3px;
  font-weight: 600;
  font-size: 17px;
  line-height: 28px;
  white-space: nowrap;
}

.grid {
  display: flex;
  height: 180px;
  overflow: hidden;
  border: 1px solid #c0c0c0;
}

.allergies .grid {
  height: 100px;
}

table {
  flex: 1;
  align-self: flex-start;
  min-width: 0;
  table-layout: fixed;
  border-spacing: 0;
}

th, td {
  height: 28px;
  padding: 0 4px;
  border-right: 1px solid #c3c9d6;
  border-bottom: 1px solid #d9d9d9;
  line-height: 26px;
  text-align: left;
  font-weight: 400;
  white-space: nowrap;
  overflow: hidden;
}

th {
  height: 27px;
  border-color: #c0c0c0;
}

th:last-child,
td:last-child {
  border-right: 0;
}

.check {
  width: 38px;
  padding: 0 1px;
}

.check input {
  display: block;
  appearance: none;
  width: 28px;
  height: 25px;
  margin: 0;
  border: 1px solid #222;
  background: #fff;
}

.date {
  width: 100px;
}

.strength {
  width: 41%;
}

.sort-down,
.sort-up {
  float: right;
  margin: 11px 4px 0 0;
}

.selected td {
  background: #74a3e0;
  border-right-color: #74a3e0;
}

.selected .check input {
  background: #e2ecf9;
}

.scroll-col {
  flex: none;
  display: flex;
  flex-direction: column;
  width: 18px;
}

.scroll-col::before {
  content: "";
  height: 27px;
  margin-bottom: 1px;
  border-left: 1px solid #c0c0c0;
  border-bottom: 1px solid #c0c0c0;
}

.scroll-col .scroll {
  flex: 1;
  margin: 0 1px 1px 1px;
}

/* right column */

.right {
  display: flex;
  flex-direction: column;
  gap: 4px;
  min-height: 0;
}

.evaluation {
  flex: 1;
  display: flex;
  flex-direction: column;
  padding: 0 7px 8px;
}

.evaluation .panel-title {
  padding: 0 3px 0 1px;
}

.note-bar {
  display: flex;
  align-items: center;
  height: 52px;
  padding-left: 10px;
}

.note-name {
  color: #000;
  font-size: 19px;
  font-weight: 600;
}

.remove {
  margin: 0 auto 0 2px;
}

.remove svg {
  width: 15px;
  height: 15px;
}

.date-label {
  margin-right: 7px;
  font-size: 11px;
  font-weight: 600;
}

.date-box {
  display: flex;
  align-items: center;
  width: 120px;
  height: 30px;
  padding: 0 3px 0 4px;
  border: 1px solid #c0c0c0;
}

.date-box input {
  flex: 1;
  min-width: 0;
  padding: 0;
  border: 0;
  color: #444;
  font: 17px "Open Sans", sans-serif;
}

.date-box svg {
  width: 13px;
  height: 14px;
}

.actions {
  display: flex;
  gap: 8px;
  margin-left: 7px;
}

.actions button {
  display: flex;
  flex-direction: column;
  align-items: center;
  font-size: 11px;
  line-height: 18px;
}

.actions svg {
  width: 30px;
  height: 30px;
}

.outline {
  flex: 1;
  display: flex;
  padding: 1px;
  border: 1px solid #c0c0c0;
}

.topics {
  flex: 1;
  margin-top: -1px;
}

.topic {
  position: relative;
  display: grid;
  grid-template-columns: 1fr 20px 20px;
  column-gap: 6px;
  height: 50px;
  padding: 0 3px 0 19px;
  align-content: start;
}

.topic a {
  height: 25px;
  margin-right: -2px;
  border-bottom: 1px solid #3566a5;
  font-size: 15px;
  font-weight: 600;
  line-height: 24px;
}

.topic.current a {
  color: #000;
}

/* fold marker in front of the topic */
.topic::before {
  content: "";
  position: absolute;
  left: 7px;
  top: 11px;
  border: 3px solid transparent;
  border-right-color: #444;
  border-bottom-color: #444;
}

.topic::after {
  content: "";
  grid-column: 1 / -1;
  height: 23px;
  margin: 0 -3px 0 20px;
  border-bottom: 1px solid #3566a5;
}

.topic.last {
  height: 35px;
}

.topic.last::after {
  display: none;
}

.topic button {
  padding-top: 3px;
}

.topic button svg {
  width: 20px;
  height: 20px;
}

.callout {
  position: absolute;
  left: -2px;
  top: -7px;
  width: 116px;
  height: 33px;
  border: 4px solid #fc5b4b;
  filter: drop-shadow(1px 3px 2px rgba(0, 0, 0, 0.5));
}

.callout svg {
  position: absolute;
  right: 118px;
  top: -3px;
  width: 106px;
  height: 32px;
}

/* assessment and plan */

.assessment {
  padding-bottom: 3px;
}

.text-head {
  display: flex;
  align-items: center;
  height: 30px;
  padding: 0 3px 1px 2px;
  border-bottom: 1px solid #3566a5;
  font-size: 13px;
}

.text-head label {
  flex: 1;
  padding-top: 3px;
}

.text-head span {
  font-size: 12px;
}

.text-head.plan {
  height: 33px;
}

.picker {
  display: flex;
  align-items: center;
  gap: 4px;
  height: 23px;
  margin: 0 13px 0 4px;
  padding: 0 5px 0 1px;
  border: 1px solid #c0c0c0;
}

.plan .picker {
  margin-right: 7px;
}

.picker svg {
  width: 16px;
  height: 14px;
}

.picker::after {
  content: "";
  border: 4px solid transparent;
  border-top: 5px solid #444;
  border-bottom: 0;
}

.redo svg {
  width: 20px;
  height: 20px;
}

.assessment textarea {
  width: calc(100% - 5px);
  height: 83px;
  margin: 9px 2px 0 3px;
  padding: 1px 5px;
  border: 1px solid #a5a5a5;
  color: #000;
  font: 12px "Liberation Sans", Arial, sans-serif;
}

/* vertical tabs */

.side-tabs {
  display: flex;
  flex-direction: column;
  align-items: flex-start;
  gap: 13px;
  padding: 7px 0 0 4px;
  font-size: 13px;
}

.side-tabs a {
  writing-mode: vertical-rl;
  text-decoration: none;
}
```
